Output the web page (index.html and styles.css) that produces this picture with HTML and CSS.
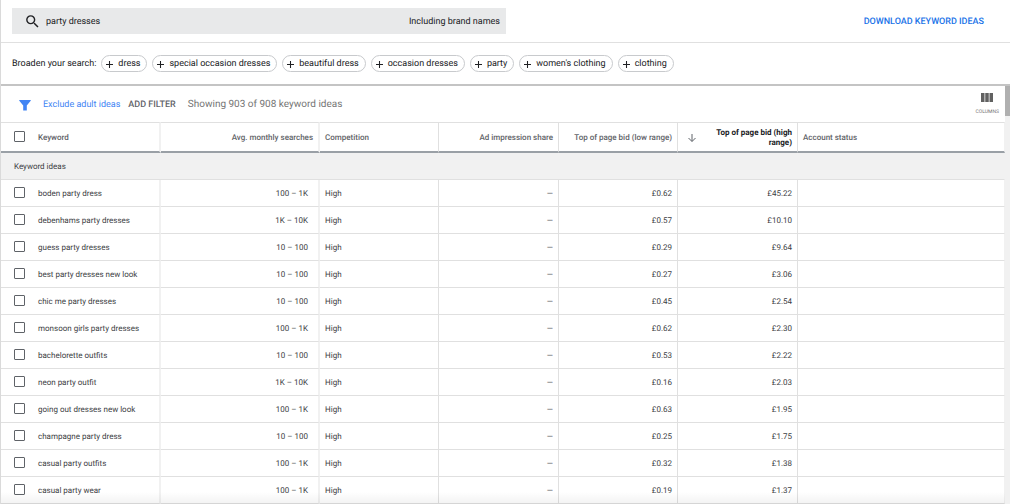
FILE: index.html
```html
<!DOCTYPE html>
<html lang="en">
<head>
<meta charset="utf-8">
<title>Keyword ideas</title>
<link rel="stylesheet" href="styles.css">
</head>
<body>
<div class="planner">
  <header class="topbar">
    <div class="search">
      <svg class="search-icon" viewBox="0 0 24 24" aria-hidden="true"><path d="M15.5 14h-.79l-.28-.27A6.47 6.47 0 0 0 16 9.5 6.5 6.5 0 1 0 9.5 16c1.61 0 3.09-.59 4.23-1.57l.27.28v.79l5 4.99L20.49 19l-4.99-5zm-6 0C7.01 14 5 11.99 5 9.5S7.01 5 9.5 5 14 7.01 14 9.5 11.99 14 9.5 14z"/></svg>
      <input class="search-input" type="text" value="party dresses" aria-label="Search keywords">
      <span class="brand-note">Including brand names</span>
    </div>
    <button class="download" type="button">DOWNLOAD KEYWORD IDEAS</button>
  </header>

  <section class="broaden">
    <span class="broaden-label">Broaden your search:</span>
    <button class="chip" type="button"><svg class="plus" viewBox="0 0 8 8" aria-hidden="true"><path d="M4 0v8M0 4h8"/></svg>dress</button>
    <button class="chip" type="button"><svg class="plus" viewBox="0 0 8 8" aria-hidden="true"><path d="M4 0v8M0 4h8"/></svg>special occasion dresses</button>
    <button class="chip" type="button"><svg class="plus" viewBox="0 0 8 8" aria-hidden="true"><path d="M4 0v8M0 4h8"/></svg>beautiful dress</button>
    <button class="chip" type="button"><svg class="plus" viewBox="0 0 8 8" aria-hidden="true"><path d="M4 0v8M0 4h8"/></svg>occasion dresses</button>
    <button class="chip" type="button"><svg class="plus" viewBox="0 0 8 8" aria-hidden="true"><path d="M4 0v8M0 4h8"/></svg>party</button>
    <button class="chip" type="button"><svg class="plus" viewBox="0 0 8 8" aria-hidden="true"><path d="M4 0v8M0 4h8"/></svg>women's clothing</button>
    <button class="chip" type="button"><svg class="plus" viewBox="0 0 8 8" aria-hidden="true"><path d="M4 0v8M0 4h8"/></svg>clothing</button>
  </section>

  <div class="results">
    <main class="panel">
      <div class="toolbar">
        <svg class="filter-icon" viewBox="0 0 12 12" aria-hidden="true"><path d="M.6 1h10.8c.4 0 .5.5.3.8L7.800 6.600V11.500H4.200V6.600L.3 1.800C.1 1.500.2 1 .6 1z"/></svg>
        <a class="exclude" href="#">Exclude adult ideas</a>
        <button class="add-filter" type="button">ADD FILTER</button>
        <span class="count">Showing 903 of 908 keyword ideas</span>
        <button class="columns" type="button">
          <svg class="columns-icon" viewBox="0 0 12 9" aria-hidden="true"><path d="M0 0h3.500v9H0zM4.250 0h3.500v9h-3.500zM8.500 0H12v9H8.500z"/></svg>
          COLUMNS
        </button>
      </div>
      <table class="ideas">
        <colgroup><col class="c-check"><col class="c-keyword"><col class="c-searches"><col class="c-bid"><col class="c-metric"><col class="c-bid"><col class="c-metric"><col></colgroup>
        <thead>
          <tr>
            <th class="check"><input type="checkbox" aria-label="Select all keywords"></th>
            <th class="keyword">Keyword</th>
            <th class="searches">Avg. monthly searches</th>
            <th>Competition</th>
            <th class="num">Ad impression share</th>
            <th class="num">Top of page bid (low range)</th>
            <th class="num sorted"><div class="sort"><svg class="arrow" viewBox="0 0 8 8" aria-hidden="true"><path d="M4 0v7.300M.5 4L4 7.500 7.500 4"/></svg><span>Top of page bid (high range)</span></div></th>
            <th>Account status</th>
          </tr>
        </thead>
        <tbody>
          <tr class="group"><th colspan="8" scope="rowgroup">Keyword ideas</th></tr>
          <tr><td class="check"><input type="checkbox" id="k1"></td><td class="keyword"><label for="k1">boden party dress</label></td><td class="searches">100 – 1K</td><td>High</td><td class="num">—</td><td class="num">£0.62</td><td class="num">£45.22</td><td></td></tr>
          <tr><td class="check"><input type="checkbox" id="k2"></td><td class="keyword"><label for="k2">debenhams party dresses</label></td><td class="searches">1K – 10K</td><td>High</td><td class="num">—</td><td class="num">£0.57</td><td class="num">£10.10</td><td></td></tr>
          <tr><td class="check"><input type="checkbox" id="k3"></td><td class="keyword"><label for="k3">guess party dresses</label></td><td class="searches">10 – 100</td><td>High</td><td class="num">—</td><td class="num">£0.29</td><td class="num">£9.64</td><td></td></tr>
          <tr><td class="check"><input type="checkbox" id="k4"></td><td class="keyword"><label for="k4">best party dresses new look</label></td><td class="searches">10 – 100</td><td>High</td><td class="num">—</td><td class="num">£0.27</td><td class="num">£3.06</td><td></td></tr>
          <tr><td class="check"><input type="checkbox" id="k5"></td><td class="keyword"><label for="k5">chic me party dresses</label></td><td class="searches">10 – 100</td><td>High</td><td class="num">—</td><td class="num">£0.45</td><td class="num">£2.54</td><td></td></tr>
          <tr><td class="check"><input type="checkbox" id="k6"></td><td class="keyword"><label for="k6">monsoon girls party dresses</label></td><td class="searches">100 – 1K</td><td>High</td><td class="num">—</td><td class="num">£0.62</td><td class="num">£2.30</td><td></td></tr>
          <tr><td class="check"><input type="checkbox" id="k7"></td><td class="keyword"><label for="k7">bachelorette outfits</label></td><td class="searches">10 – 100</td><td>High</td><td class="num">—</td><td class="num">£0.53</td><td class="num">£2.22</td><td></td></tr>
          <tr><td class="check"><input type="checkbox" id="k8"></td><td class="keyword"><label for="k8">neon party outfit</label></td><td class="searches">1K – 10K</td><td>High</td><td class="num">—</td><td class="num">£0.16</td><td class="num">£2.03</td><td></td></tr>
          <tr><td class="check"><input type="checkbox" id="k9"></td><td class="keyword"><label for="k9">going out dresses new look</label></td><td class="searches">100 – 1K</td><td>High</td><td class="num">—</td><td class="num">£0.63</td><td class="num">£1.95</td><td></td></tr>
          <tr><td class="check"><input type="checkbox" id="k10"></td><td class="keyword"><label for="k10">champagne party dress</label></td><td class="searches">10 – 100</td><td>High</td><td class="num">—</td><td class="num">£0.25</td><td class="num">£1.75</td><td></td></tr>
          <tr><td class="check"><input type="checkbox" id="k11"></td><td class="keyword"><label for="k11">casual party outfits</label></td><td class="searches">100 – 1K</td><td>High</td><td class="num">—</td><td class="num">£0.32</td><td class="num">£1.38</td><td></td></tr>
          <tr><td class="check"><input type="checkbox" id="k12"></td><td class="keyword"><label for="k12">casual party wear</label></td><td class="searches">100 – 1K</td><td>High</td><td class="num">—</td><td class="num">£0.19</td><td class="num">£1.37</td><td></td></tr>
        </tbody>
      </table>
      <div class="fade"></div>
    </main>
    <div class="scroll-track"><div class="scroll-thumb"></div></div>
  </div>
</div>
</body>
</html>
```

FILE: styles.css
```css
* {
  box-sizing: border-box;
}

body {
  margin: 0;
  background: #fff;
  color: #3c4043;
  font: 9px/12px Roboto, "Liberation Sans", sans-serif;
  text-rendering: geometricPrecision;
}

button,
input {
  margin: 0;
  padding: 0;
  border: 0;
  background: none;
  color: inherit;
  font: inherit;
  text-rendering: inherit;
}

.planner {
  border-left: 1px solid #dadada;
}

.topbar {
  display: flex;
  align-items: center;
  justify-content: space-between;
  padding: 8px 26px 8px 11px;
  border-bottom: 1px solid #e0e0e0;
  color: #202124;
}

.search {
  display: flex;
  align-items: center;
  flex: 0 1 494px;
  height: 26px;
  padding: 0 6px 0 12px;
  background: #e8e9ea;
}

.search-icon {
  width: 17px;
  height: 17px;
  margin-right: 5px;
  fill: #202124;
}

.search-input {
  flex: 1;
  min-width: 0;
}

.search-input,
.brand-note,
.download {
  padding-top: 2px;
}

.download {
  color: #1a73e8;
  font-size: 9px;
  font-weight: 500;
}

.broaden {
  display: flex;
  align-items: center;
  gap: 5px;
  padding: 12px 11px;
  border-bottom: 2px solid #c4c4c4;
  color: #202124;
}

.broaden-label {
  padding-top: 1px;
}

.chip {
  display: flex;
  align-items: center;
  gap: 5px;
  height: 17px;
  padding: 1px 6px 0 4px;
  border: 1px solid #c8cacd;
  border-radius: 9px;
}

.plus {
  width: 7px;
  height: 7px;
  fill: none;
  stroke: #202124;
  stroke-width: 1.2;
}

.results {
  display: flex;
}

.panel {
  position: relative;
  flex: 1;
  min-width: 0;
}

.toolbar {
  display: flex;
  align-items: center;
  gap: 8px;
  height: 36px;
  padding: 1px 6px 0 18px;
  font-size: 10px;
}

.filter-icon {
  width: 12px;
  height: 12px;
  margin-right: 4px;
  fill: #4285f4;
}

.exclude {
  color: #4285f4;
  font-size: 9px;
  text-decoration: none;
}

.add-filter {
  color: #5f6368;
  font-size: 9px;
  font-weight: 500;
}

.count {
  margin-left: 4px;
  color: #757575;
}

.columns {
  display: flex;
  flex-direction: column;
  align-items: center;
  gap: 6px;
  margin-left: auto;
  color: #757575;
  font-size: 5px;
  line-height: 8px;
}

.columns-icon {
  width: 12px;
  height: 9px;
  fill: #616161;
}

.ideas {
  width: 100%;
  table-layout: fixed;
  border-collapse: separate;
  border-spacing: 0;
  font-size: 8px;
  line-height: 10px;
}

.c-check {
  width: 36px;
}

.c-keyword {
  width: 124px;
}

.c-searches {
  width: 159px;
}

.c-metric {
  width: 120px;
}

.c-bid {
  width: 119px;
}

.ideas td,
.ideas th {
  height: 27px;
  padding: 2px 5px 0;
  border-right: 1px solid #e0e0e0;
  border-bottom: 1px solid #e0e0e0;
  font-weight: 400;
  text-align: left;
}

.ideas thead th {
  height: 31px;
  border-top: 1px solid #e0e0e0;
  border-bottom: 2px solid #9aa0a6;
  color: #5f6368;
  font-weight: 500;
}

.ideas .group th {
  height: 27px;
  padding-left: 13px;
  background: #f1f1f1;
}

.ideas td:last-child,
.ideas th:last-child {
  border-right-color: #f1f1f1;
}

.ideas .check {
  padding: 0 0 1px 13px;
  border-right: 0;
}

.ideas .keyword,
.ideas .searches {
  padding-left: 1px;
  border-right: 2px solid #f1f1f1;
}

.ideas .num,
.ideas .searches {
  text-align: right;
}

.ideas td.searches {
  padding-right: 10px;
}

.ideas input {
  display: block;
  width: 11px;
  height: 11px;
  appearance: none;
  border: 1px solid #5f6368;
  border-radius: 1px;
}

.ideas .sorted {
  color: #202124;
  font-weight: 700;
}

.sort {
  display: flex;
  align-items: center;
  justify-content: space-between;
  gap: 12px;
  padding-left: 5px;
}

.arrow {
  flex: none;
  width: 8px;
  height: 8px;
  fill: none;
  stroke: #5f6368;
}

.fade {
  position: absolute;
  right: 0;
  bottom: 0;
  left: 0;
  height: 12px;
  background: linear-gradient(transparent, rgba(0, 0, 0, 0.05));
  pointer-events: none;
}

.scroll-track {
  width: 5px;
  background: #f1f1f1;
}

.scroll-thumb {
  height: 30px;
  background: #b0b0b0;
}
```
